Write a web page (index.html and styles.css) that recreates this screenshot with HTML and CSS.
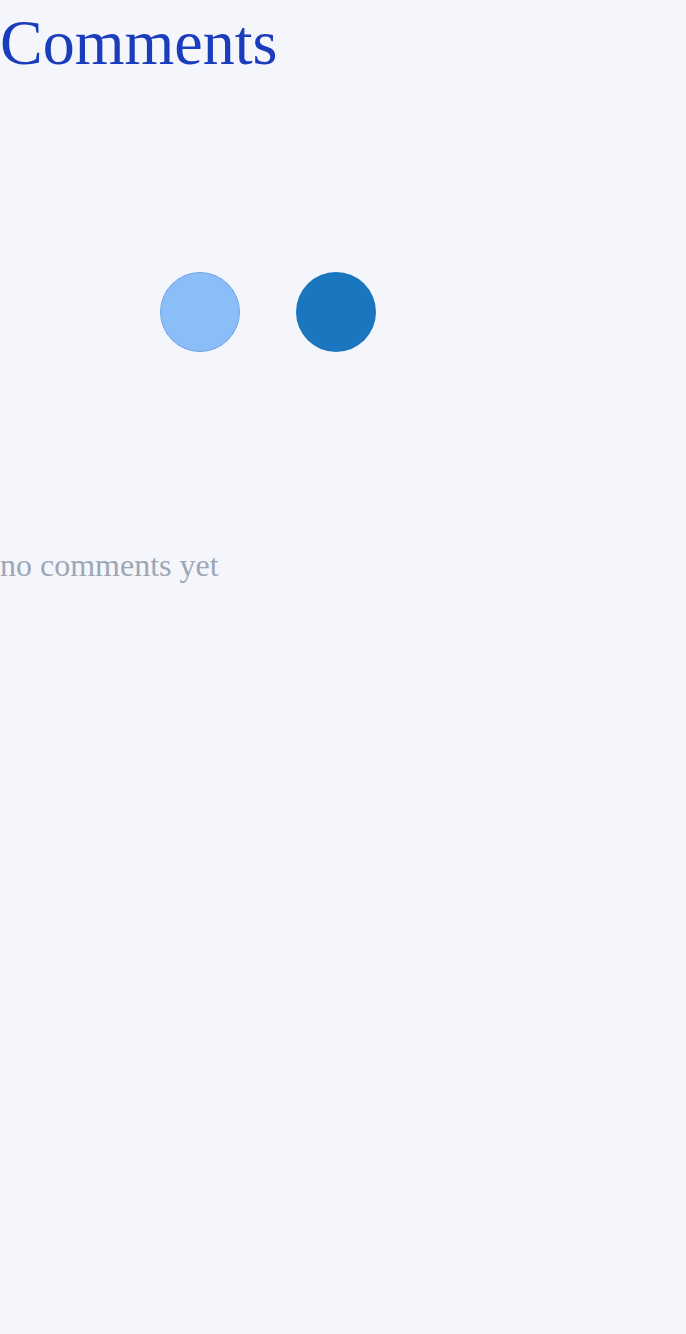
FILE: index.html
```html
<!DOCTYPE html>
<html>
<head>
<meta charset="utf-8">
<link rel="stylesheet" href="styles.css">
</head>
<body>
<main class="page">
  <h1 class="title">Comments</h1>
  <div class="loader">
    <span class="dot dot-light"></span>
    <span class="dot dot-dark"></span>
  </div>
  <p class="empty">no comments yet</p>
</main>
</body>
</html>
```
FILE: styles.css
```css
html, body {
  margin: 0;
  padding: 0;
  background: #f5f6fb;
  min-height: 100%;
}
body {
  font-family: "Liberation Serif", "Times New Roman", serif;
}
.page {
  display: flex;
  flex-direction: column;
}
.title {
  margin: 0;
  padding-top: 6px;
  font-size: 64px;
  font-weight: 400;
  color: #1a3dbd;
  line-height: 1.15;
}
.loader {
  display: flex;
  gap: 56px;
  padding-left: 160px;
  margin-top: 192px;
}
.dot {
  width: 80px;
  height: 80px;
  border-radius: 50%;
  box-sizing: border-box;
}
.dot-light {
  background: #8bbdf8;
  border: 1px solid #6ea6ea;
}
.dot-dark {
  background: #1a76bf;
}
.empty {
  margin: 195px 0 0;
  font-size: 32px;
  color: #9ea6b6;
  line-height: 1.15;
}
```
